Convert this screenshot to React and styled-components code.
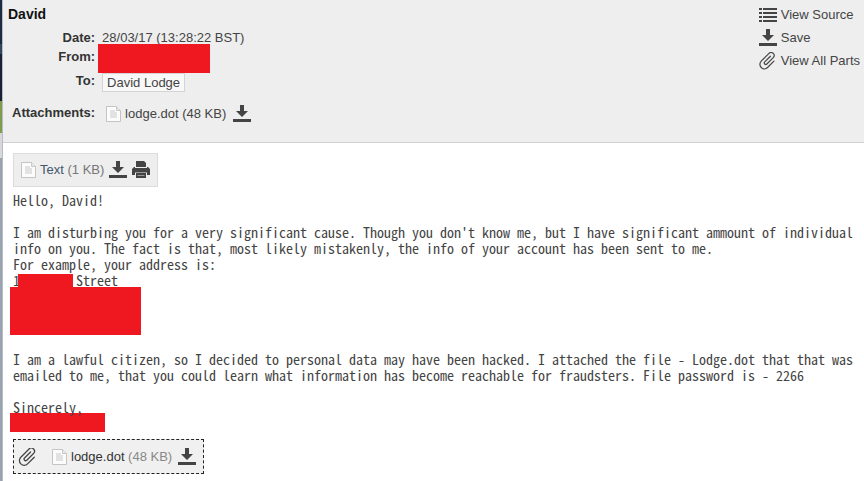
import React from "react";
import styled, { createGlobalStyle } from "styled-components";

const GlobalStyle = createGlobalStyle`
  * { box-sizing: border-box; }
  body {
    margin: 0;
    background: #fff;
    color: #333;
    font: 13px/16px "Liberation Sans", Arial, sans-serif;
  }
  button {
    font: inherit;
    color: inherit;
    cursor: pointer;
  }
`;

const Page = styled.div`
  display: flex;
  min-height: 100vh;
`;

const Backdrop = styled.div`
  flex: none;
  width: 3px;
  background: linear-gradient(
    #1d2b41 0 44px, #34455f 44px 54px, #1a2030 54px 101px, #7f9c4c 101px 133px,
    #d8d8d8 133px 158px, #98a3af 158px
  );
  border-right: 1px solid #b4bcc4;
`;

const Main = styled.main`
  flex: 1;
  min-width: 0;
`;

const Header = styled.header`
  display: flex;
  justify-content: space-between;
  align-items: flex-start;
  padding: 6px 4px 19px 5px;
  background: #eee;
  border-bottom: 1px solid #d0d0d0;
`;

const Subject = styled.h1`
  margin: 0 0 7px;
  font-size: 14px;
  line-height: 16px;
  color: #111;
`;

const Fields = styled.dl`
  display: grid;
  grid-template-columns: max-content max-content;
  column-gap: 7px;
  margin: 0 0 0 4px;
`;

const Label = styled.dt`
  padding-top: ${(p) => p.$top || 0}px;
  text-align: right;
  font-weight: bold;
`;

const Value = styled.dd`
  display: flex;
  align-items: center;
  margin: ${(p) => p.$top || 0}px 0 0;
  color: #444;
`;

const Redaction = styled.div`
  width: ${(p) => p.$width}px;
  height: ${(p) => p.$height}px;
  margin: ${(p) => p.$margin || 0};
  background: #f01820;
`;

const InlineRedaction = styled.span`
  display: inline-block;
  width: 55px;
  height: 13px;
  margin: 0 -4px 0 -2px;
  vertical-align: -1px;
  background: #f01820;
`;

const Recipient = styled.button`
  height: 19px;
  padding: 0 4px;
  border: 1px solid #d4d4d4;
  background: #f8f8f8;
  line-height: 16px;
`;

const Actions = styled.nav`
  display: grid;
  row-gap: 5px;
`;

const Action = styled.a`
  display: flex;
  align-items: center;
  gap: 4px;
  height: 18px;
  color: #444;
  text-decoration: none;
`;

const IconButton = styled.button`
  display: flex;
  padding: 0;
  border: 0;
  background: none;
`;

const FileLink = styled.a`
  display: flex;
  align-items: center;
  gap: 4px;
  color: ${(p) => p.$color || "#444"};
  text-decoration: none;
`;

const Size = styled.span`
  color: ${(p) => p.$color};
`;

const Body = styled.section`
  padding: 10px 0 6px 10px;
`;

const PartBar = styled.div`
  display: flex;
  align-items: center;
  gap: 5px;
  width: max-content;
  height: 34px;
  padding: 0 7px;
  border: 1px solid #dcdcdc;
  background: #eee;
`;

const AttachmentBar = styled(PartBar)`
  gap: 6px;
  height: 35px;
  margin-top: 7px;
  padding: 0 7px 0 4px;
  border: 1px dashed #222;
  background: #f0f0f0;
`;

const ClipSlot = styled.span`
  display: flex;
  margin-right: 8px;
`;

const Message = styled.p`
  margin: ${(p) => p.$top}px 0 0;
  font: 14px/16px "Noto Sans Mono CJK SC", "Liberation Mono", monospace;
  white-space: pre-wrap;
  color: #444;
`;

const Icon = styled.svg`
  display: block;
  flex: none;
  width: ${(p) => p.$w || 18}px;
  height: 18px;
`;

const ListIcon = () => (
  <Icon viewBox="0 0 18 18" aria-hidden="true">
    <path d="M0 2h3v2H0zM0 6h3v2H0zM0 10h3v2H0zM0 14h3v2H0zM4 2h14v2H4zM4 6h14v2H4zM4 10h14v2H4zM4 14h14v2H4z" fill="#444" />
  </Icon>
);

const DownloadIcon = () => (
  <Icon viewBox="0 0 18 18" aria-hidden="true">
    <path d="M7 0h4v6h4l-6 6-6-6h4zM0 14h18v3H0z" fill="#444" />
  </Icon>
);

const ClipIcon = ({ w }) => (
  <Icon $w={w} viewBox="1 1 18 17" aria-hidden="true">
    <path
      d="M15 8H7a1.500 1.500 0 0 0 0 3h9a3 3 0 0 0 0-6H5a4.500 4.500 0 0 0 0 9h9"
      transform="rotate(-45 9.750 9.500)"
      fill="none" stroke="#444" strokeWidth="1.200" strokeLinecap="round"
    />
  </Icon>
);

const DocIcon = () => (
  <Icon $w={15} viewBox="0 0 15 18" aria-hidden="true">
    <path d="M.5 1.500h10l4 4v11H.5z" fill="#fcfcfc" stroke="#c4c4c4" />
    <path d="M10.500 1.500v4h4" fill="#e8e8e8" stroke="#c8c8c8" />
    <path d="M4 6h5M4 8h7M4 10h7M4 12h7" stroke="#c8c8c8" />
  </Icon>
);

const PrintIcon = () => (
  <Icon viewBox="0 0 18 18" aria-hidden="true">
    <path d="M4 0h8l2 2v4H4z" fill="#444" />
    <path d="M0 8l2-2h1v1h12V6h1l2 2v6h-3v-3H3v3H0z" fill="#444" />
    <path d="M4 12h10v5H4z" fill="#444" />
    <path d="M3 11.500h12M5.500 14.500h7" stroke="#999" />
  </Icon>
);

const Download = ({ name }) => (
  <IconButton type="button" aria-label={`Download ${name}`}>
    <DownloadIcon />
  </IconButton>
);

const FileSlot = styled.div`
  display: flex;
  align-items: center;
  gap: 7px;
  padding-left: 4px;
`;

export default function App() {
  return (
    <Page>
      <GlobalStyle />
      <Backdrop />
      <Main>
        <Header>
          <div>
            <Subject>David</Subject>
            <Fields>
              <Label $top={1}>Date:</Label>
              <Value>28/03/17 (13:28:22 BST)</Value>
              <Label $top={3}>From:</Label>
              <Value>
                <Redaction $width={112} $height={29} $margin="-2px 0 0 -4px" />
              </Value>
              <Label>To:</Label>
              <Value>
                <Recipient type="button">David Lodge</Recipient>
              </Value>
              <Label $top={13}>Attachments:</Label>
              <Value $top={13}>
                <FileSlot>
                  <FileLink href="#lodge">
                    <DocIcon />
                    lodge.dot (48 KB)
                  </FileLink>
                  <Download name="lodge.dot" />
                </FileSlot>
              </Value>
            </Fields>
          </div>
          <Actions aria-label="Message actions">
            <Action href="#source"><ListIcon />View Source</Action>
            <Action href="#save"><DownloadIcon />Save</Action>
            <Action href="#parts"><ClipIcon />View All Parts</Action>
          </Actions>
        </Header>
        <Body>
          <PartBar>
            <FileLink href="#text" $color="#44566c">
              <DocIcon />
              <span>Text <Size $color="#777">(1 KB)</Size></span>
            </FileLink>
            <Download name="Text" />
            <IconButton type="button" aria-label="Print"><PrintIcon /></IconButton>
          </PartBar>
          <Message $top={5}>
            Hello, David!{"\n\n"}
            I am disturbing you for a very significant cause. Though you don't know me, but I have significant ammount of individual{"\n"}
            info on you. The fact is that, most likely mistakenly, the info of your account has been sent to me.{"\n"}
            For example, your address is:{"\n"}
            1<InlineRedaction /> Street
          </Message>
          <Redaction $width={131} $height={48} $margin="-1px 0 0 -3px" />
          <Message $top={16}>
            I am a lawful citizen, so I decided to personal data may have been hacked. I attached the file - Lodge.dot that that was{"\n"}
            emailed to me, that you could learn what information has become reachable for fraudsters. File password is - 2266{"\n\n"}
            Sincerely,
          </Message>
          <Redaction $width={95} $height={19} $margin="-2px 0 0 -3px" />
          <AttachmentBar>
            <ClipSlot><ClipIcon w={20} /></ClipSlot>
            <FileLink href="#lodge" $color="#333">
              <DocIcon />
              <span>lodge.dot <Size $color="#888">(48 KB)</Size></span>
            </FileLink>
            <Download name="lodge.dot" />
          </AttachmentBar>
        </Body>
      </Main>
    </Page>
  );
}
